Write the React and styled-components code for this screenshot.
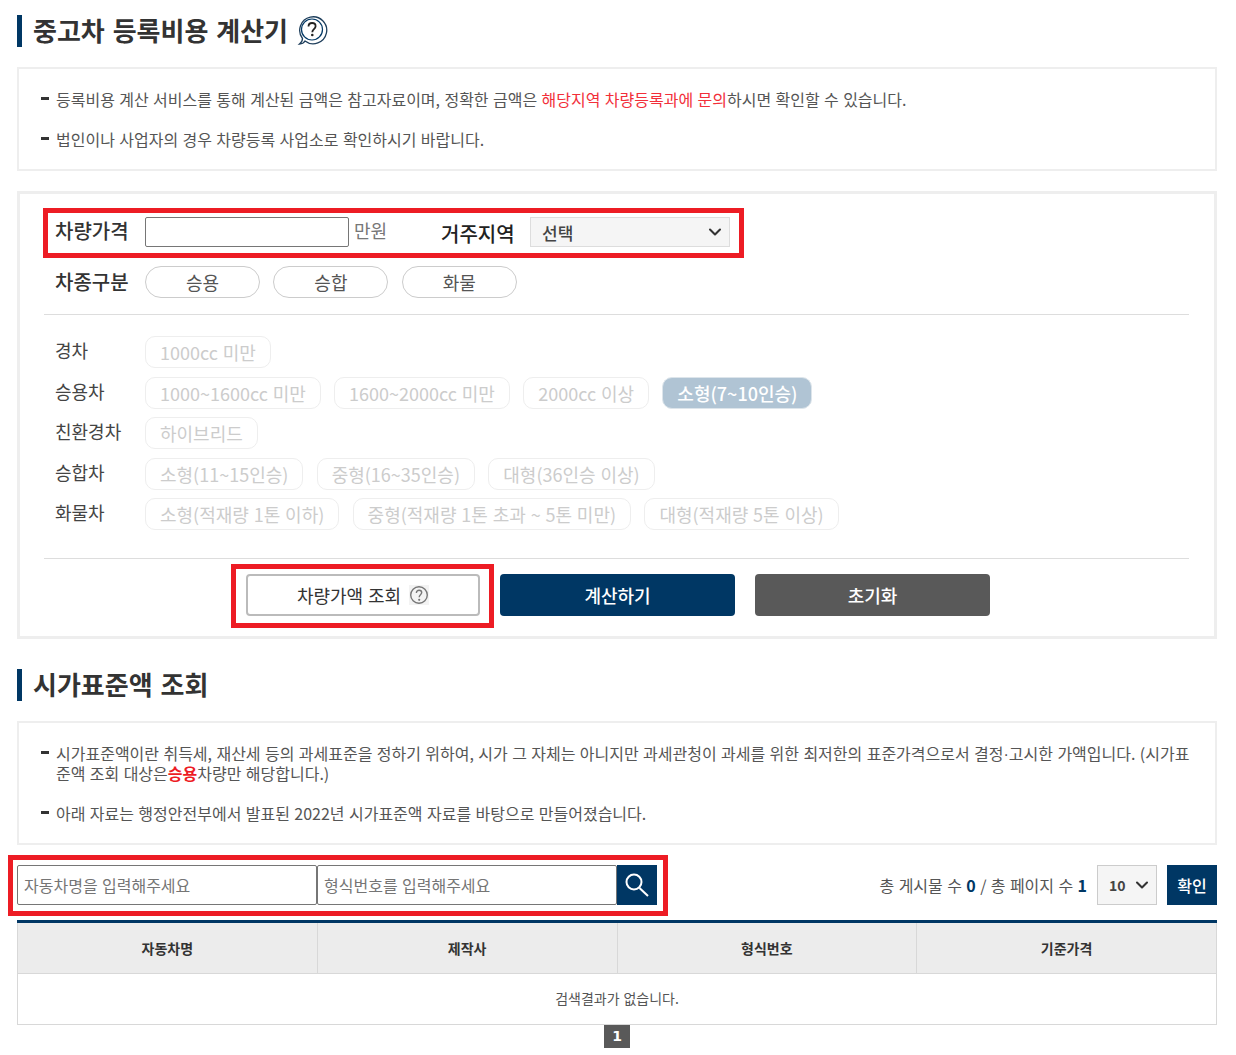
import React from 'react';
import styled, { createGlobalStyle } from 'styled-components';
import { ChevronDown } from 'lucide-react';

const GlobalStyle = createGlobalStyle`
    html, body {
        margin: 0;
        padding: 0;
        background: #fff;
    }
    body {
        font-family: "Noto Sans CJK KR", "Noto Sans", sans-serif;
        color: #555;
        word-spacing: 0.05em;
    }
    button, input, select {
        word-spacing: inherit;
    }
    * {
        box-sizing: border-box;
    }
`;

const NAVY = '#003764';
const RED = '#ed1c24';

const Page = styled.div`
    width: 1200px;
    margin-left: 17px;
    padding-top: 15px;
`;

const Heading = styled.h2`
    display: flex;
    align-items: center;
    gap: 9px;
    height: 32px;
    margin: ${props => props.$margin || '0'};
    padding: 0 0 2px 11px;
    border-left: 5px solid ${NAVY};
    font-size: 26px;
    line-height: 30px;
    font-weight: 700;
    word-spacing: 2px;
    color: #333;
`;

const InfoBox = styled.div`
    display: flex;
    flex-direction: column;
    gap: 20px;
    margin-top: 20px;
    padding: 20px 22px 20px;
    border: 2px solid #eee;
`;

const InfoLine = styled.p`
    position: relative;
    margin: 0;
    padding-left: 15px;
    font-size: 16px;
    line-height: 20px;
    word-break: break-all;
    color: #555;
    &::before {
        content: '';
        position: absolute;
        left: 0;
        top: 8px;
        width: 8px;
        height: 3px;
        background: #333;
    }
`;

const RedText = styled.span`
    color: ${props => (props.$bold ? RED : '#f22f3a')};
    font-weight: ${props => (props.$bold ? 700 : 400)};
`;

const MiddleDot = styled.span`
    font-family: "Liberation Sans", sans-serif;
    line-height: 0;
`;

const FormBox = styled.div`
    margin-top: 20px;
    height: 448px;
    padding: 23px 25px 0 24px;
    border: 3px solid #eee;
`;

const Highlight = styled.div`
    position: relative;
    &::after {
        content: '';
        position: absolute;
        inset: ${props => props.$inset};
        border: 5px solid ${RED};
        pointer-events: none;
    }
`;

const TopRow = styled(Highlight)`
    display: flex;
    align-items: center;
    height: 30px;
    padding-left: 11px;
`;

const Label = styled.span`
    width: 90px;
    flex: none;
    font-size: 20px;
    line-height: 30px;
    font-weight: 500;
    color: #333;
    position: relative;
    top: ${props => props.$top || 0}px;
`;

const PriceInput = styled.input`
    width: 204px;
    height: 30px;
    padding: 0 8px;
    border: 1px solid #767676;
    border-radius: 2px;
    background: #fff;
    font: inherit;
`;

const Unit = styled.span`
    margin-left: 5px;
    width: 87px;
    font-size: 18px;
    line-height: 24px;
    color: #777;
    position: relative;
    top: -2px;
`;

const RegionLabel = styled(Label)`
    width: 89px;
    color: #222;
    top: 2px;
`;

const SelectWrap = styled.div`
    position: relative;
    width: ${props => props.$width}px;
    height: ${props => props.$height}px;
    flex: none;
    svg {
        position: absolute;
        right: 5px;
        top: 50%;
        transform: translateY(-50%);
        color: #333;
        pointer-events: none;
    }
`;

const Select = styled.select`
    appearance: none;
    width: 100%;
    height: 100%;
    padding-left: ${props => props.$padLeft}px;
    border: 1px solid ${props => props.$line};
    border-radius: 0;
    background: #f5f5f5;
    font-family: inherit;
    font-size: ${props => props.$size}px;
    font-weight: ${props => props.$weight};
    color: #444;
`;

const KindRow = styled.div`
    display: flex;
    align-items: center;
    height: 32px;
    margin-top: 19px;
    padding-left: 11px;
`;

const Pills = styled.div`
    display: flex;
    gap: 13.4px;
`;

const Pill = styled.button`
    width: 115px;
    height: 32px;
    padding: 0;
    border: 1px solid #ccc;
    border-radius: 16px;
    background: #fff;
    font-family: inherit;
    font-size: 18px;
    color: #555;
`;

const Divider = styled.hr`
    height: 1px;
    margin: ${props => props.$margin};
    border: 0;
    background: #ddd;
`;

const OptionRows = styled.div`
    display: flex;
    flex-direction: column;
    gap: 8.5px;
    padding-left: 11px;
`;

const OptionRow = styled.div`
    display: flex;
    align-items: center;
    height: 32px;
`;

const RowName = styled.span`
    width: 90px;
    flex: none;
    font-size: 18px;
    line-height: 26px;
    color: #444;
    position: relative;
    top: -2px;
`;

const Chips = styled.div`
    display: flex;
    gap: 13.3px;
`;

const Chip = styled.button`
    height: 32px;
    padding: 0 14px;
    border: 1px solid ${props => (props.$active ? '#dde5eb' : '#eee')};
    border-radius: 10px;
    background: ${props => (props.$active ? '#b0c4d4' : '#fff')};
    font-family: inherit;
    font-size: 18px;
    font-weight: ${props => (props.$active ? 500 : 400)};
    white-space: nowrap;
    color: ${props => (props.$active ? '#fff' : '#ccc')};
`;

const Actions = styled.div`
    display: flex;
    justify-content: center;
    gap: 20px;
    padding-left: 3px;
`;

const CheckButton = styled.button`
    display: flex;
    align-items: center;
    justify-content: center;
    gap: 8px;
    width: 234px;
    height: 42px;
    padding: 0;
    border: 2px solid #bbb;
    border-radius: 4px;
    background: #fff;
    font-family: inherit;
    font-size: 18px;
    color: #333;
`;

const ActionButton = styled.button`
    width: 235px;
    height: 42px;
    padding: 0;
    border: 0;
    border-radius: 4px;
    background: ${props => props.$bg};
    font-family: inherit;
    font-size: 18px;
    font-weight: 500;
    color: #fff;
`;

const Toolbar = styled.div`
    display: flex;
    align-items: center;
    justify-content: space-between;
    height: 40px;
    margin-top: 20px;
`;

const SearchGroup = styled(Highlight)`
    display: flex;
`;

const SearchInput = styled.input`
    width: 300px;
    height: 40px;
    padding: 0 6px;
    border: 1px solid #767676;
    border-radius: 2px;
    background: #fff;
    font-family: inherit;
    font-size: 16px;
    &::placeholder {
        color: #757575;
    }
`;

const SearchButton = styled.button`
    display: flex;
    align-items: center;
    justify-content: center;
    width: 40px;
    height: 40px;
    padding: 0;
    border: 0;
    background: ${NAVY};
`;

const Totals = styled.div`
    display: flex;
    align-items: center;
`;

const Count = styled.span`
    margin-right: 10px;
    font-size: 16px;
    color: #555;
    b {
        font-size: 16px;
        font-weight: 700;
        color: ${NAVY};
    }
`;

const ConfirmButton = styled.button`
    width: 50px;
    height: 40px;
    margin-left: 10px;
    padding: 0;
    border: 0;
    background: ${NAVY};
    font-family: inherit;
    font-size: 16px;
    font-weight: 500;
    color: #fff;
`;

const Table = styled.table`
    width: 100%;
    margin-top: 15px;
    border-collapse: collapse;
    table-layout: fixed;
    border-top: 3px solid ${NAVY};
`;

const Th = styled.th`
    height: 52px;
    padding: 0;
    border: 1px solid #d8d8d8;
    border-top: 0;
    background: #ececec;
    font-size: 14px;
    font-weight: 700;
    color: #333;
`;

const Td = styled.td`
    height: 51px;
    padding: 0 0 2px;
    border: 1px solid #d8d8d8;
    text-align: center;
    font-size: 14px;
    color: #555;
`;

const Pager = styled.div`
    display: flex;
    justify-content: center;
`;

const PageNo = styled.span`
    width: 26px;
    height: 23px;
    background: #595959;
    text-align: center;
    font-family: "DejaVu Sans", sans-serif;
    font-size: 14px;
    line-height: 23px;
    font-weight: 700;
    color: #fff;
`;

const BubbleIcon = () => (
    <svg width="31" height="31" viewBox="0 0 31 31" fill="none">
        <path
            d="M8 26A13.500 13.500 0 1 0 5.500 23.500C5.500 25.500 4.500 27.500 2.500 29C4.800 29 6.800 28 8 26Z"
            stroke="#1f3f5c"
            strokeWidth="1.300"
            fill="#fff"
        />
        <circle cx="15" cy="14.500" r="10.500" stroke={NAVY} strokeWidth="1.200" />
        <path
            d="M11.500 11.500c0-2.200 1.600-3.500 3.600-3.500s3.500 1.300 3.500 3.200c0 2.900-3.300 3-3.300 6"
            stroke="#222"
            strokeWidth="1.800"
        />
        <circle cx="15.300" cy="20" r="1.300" fill="#222" />
    </svg>
);

const SmallHelpIcon = () => (
    <svg width="20" height="20" viewBox="0 0 20 20" fill="none">
        <rect width="20" height="20" fill="#f3f3f3" />
        <circle cx="10" cy="10" r="8.300" stroke="#777" strokeWidth="1.400" />
        <path
            d="M7.400 8c0-1.600 1.100-2.700 2.700-2.700s2.600 1 2.600 2.300c0 2.200-2.500 2.200-2.500 4.600"
            stroke="#777"
            strokeWidth="1.400"
        />
        <circle cx="10.200" cy="14.800" r="1.100" fill="#777" />
    </svg>
);

const SearchIcon = () => (
    <svg width="24" height="24" viewBox="0 0 24 24" fill="none">
        <circle cx="9" cy="9" r="7.500" stroke="#fff" strokeWidth="2" />
        <path d="M14.500 15L23 23" stroke="#fff" strokeWidth="2" />
    </svg>
);

const optionRows = [
    { name: '경차', chips: ['1000cc 미만'] },
    {
        name: '승용차',
        chips: ['1000~1600cc 미만', '1600~2000cc 미만', '2000cc 이상', '소형(7~10인승)'],
        active: '소형(7~10인승)'
    },
    { name: '친환경차', chips: ['하이브리드'] },
    { name: '승합차', chips: ['소형(11~15인승)', '중형(16~35인승)', '대형(36인승 이상)'] },
    {
        name: '화물차',
        chips: ['소형(적재량 1톤 이하)', '중형(적재량 1톤 초과 ~ 5톤 미만)', '대형(적재량 5톤 이상)']
    }
];

const columns = ['자동차명', '제작사', '형식번호', '기준가격'];

const App = () => (
    <Page>
        <GlobalStyle />
        <Heading>
            중고차 등록비용 계산기
            <BubbleIcon />
        </Heading>
        <InfoBox>
            <InfoLine>
                등록비용 계산 서비스를 통해 계산된 금액은 참고자료이며, 정확한 금액은{' '}
                <RedText>해당지역 차량등록과에 문의</RedText>하시면 확인할 수 있습니다.
            </InfoLine>
            <InfoLine>법인이나 사업자의 경우 차량등록 사업소로 확인하시기 바랍니다.</InfoLine>
        </InfoBox>

        <FormBox>
            <TopRow $inset="-9px 445px -11px -1px">
                <Label $top={-1}>차량가격</Label>
                <PriceInput type="text" />
                <Unit>만원</Unit>
                <RegionLabel>거주지역</RegionLabel>
                <SelectWrap $width={200} $height={30}>
                    <Select $padLeft={11} $line="#ddd" $size={17} $weight={500} defaultValue="선택">
                        <option>선택</option>
                    </Select>
                    <ChevronDown size={20} strokeWidth={2.5} />
                </SelectWrap>
            </TopRow>
            <KindRow>
                <Label>차종구분</Label>
                <Pills>
                    <Pill>승용</Pill>
                    <Pill>승합</Pill>
                    <Pill>화물</Pill>
                </Pills>
            </KindRow>
            <Divider $margin="16px 0 21px" />
            <OptionRows>
                {optionRows.map(row => (
                    <OptionRow key={row.name}>
                        <RowName>{row.name}</RowName>
                        <Chips>
                            {row.chips.map(chip => (
                                <Chip key={chip} $active={chip === row.active}>
                                    {chip}
                                </Chip>
                            ))}
                        </Chips>
                    </OptionRow>
                ))}
            </OptionRows>
            <Divider $margin="28px 0 15px" />
            <Actions>
                <Highlight $inset="-10px -14px -12px -15px">
                    <CheckButton>
                        차량가액 조회
                        <SmallHelpIcon />
                    </CheckButton>
                </Highlight>
                <ActionButton $bg={NAVY}>계산하기</ActionButton>
                <ActionButton $bg="#595959">초기화</ActionButton>
            </Actions>
        </FormBox>

        <Heading $margin="30px 0 0">시가표준액 조회</Heading>
        <InfoBox>
            <InfoLine>
                시가표준액이란 취득세, 재산세 등의 과세표준을 정하기 위하여, 시가 그 자체는 아니지만 과세관청이 과세를 위한 최저한의 표준가격으로서 결정<MiddleDot>·</MiddleDot>고시한 가액입니다. (시가표준액 조회 대상은<RedText $bold>승용</RedText>차량만 해당합니다.)
            </InfoLine>
            <InfoLine>아래 자료는 행정안전부에서 발표된 2022년 시가표준액 자료를 바탕으로 만들어졌습니다.</InfoLine>
        </InfoBox>

        <Toolbar>
            <SearchGroup $inset="-10px -11px -11px -9px">
                <SearchInput placeholder="자동차명을 입력해주세요" />
                <SearchInput placeholder="형식번호를 입력해주세요" />
                <SearchButton>
                    <SearchIcon />
                </SearchButton>
            </SearchGroup>
            <Totals>
                <Count>
                    총 게시물 수 <b>0</b> / 총 페이지 수 <b>1</b>
                </Count>
                <SelectWrap $width={60} $height={40}>
                    <Select $padLeft={11} $line="#ccc" $size={14} $weight={700} defaultValue="10">
                        <option>10</option>
                    </Select>
                    <ChevronDown size={20} strokeWidth={2.5} />
                </SelectWrap>
                <ConfirmButton>확인</ConfirmButton>
            </Totals>
        </Toolbar>

        <Table>
            <thead>
                <tr>
                    {columns.map(col => (
                        <Th key={col}>{col}</Th>
                    ))}
                </tr>
            </thead>
            <tbody>
                <tr>
                    <Td colSpan={4}>검색결과가 없습니다.</Td>
                </tr>
            </tbody>
        </Table>
        <Pager>
            <PageNo>1</PageNo>
        </Pager>
    </Page>
);

export default App;
